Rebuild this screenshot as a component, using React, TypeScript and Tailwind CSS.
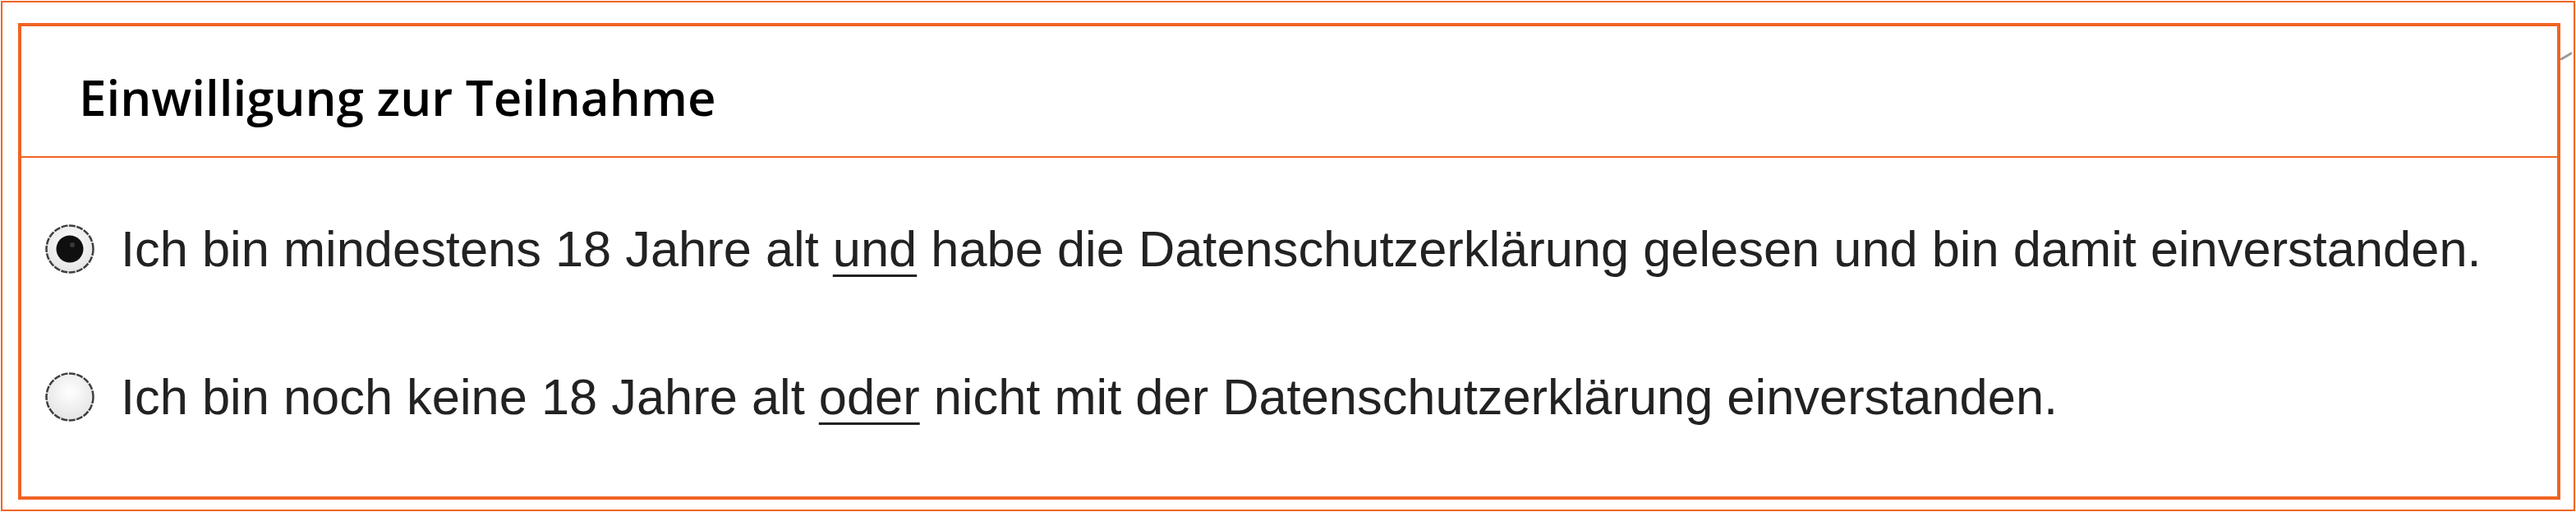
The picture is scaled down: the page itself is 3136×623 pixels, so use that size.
import React from "react";

function Radio({ checked }: { checked?: boolean }) {
  return (
    <svg width="62" height="62" viewBox="0 0 62 62" className="shrink-0">
      <defs>
        <radialGradient id={checked ? "rg1" : "rg2"} cx="50%" cy="40%" r="60%">
          <stop offset="0%" stopColor="#ffffff" />
          <stop offset="100%" stopColor="#e4e4e4" />
        </radialGradient>
      </defs>
      <circle
        cx="31"
        cy="31"
        r="28.5"
        fill={`url(#${checked ? "rg1" : "rg2"})`}
        stroke="#3f3f3f"
        strokeWidth="2.5"
        strokeDasharray="8 1.5"
      />
      {checked && (
        <>
          <circle cx="31" cy="31" r="16.5" fill="#0f0f0f" />
          <circle cx="34" cy="26" r="3" fill="#555" opacity="0.6" />
        </>
      )}
    </svg>
  );
}

export default function App() {
  return (
    <div className="w-[3136px] h-[623px] bg-white p-[1px]" style={{ fontFamily: "'Liberation Sans', Arial, sans-serif" }}>
      <div className="relative h-[621px] border-2 border-[#ef6424] pl-[19px] pr-[16px] pt-[25px] pb-[12px]">
        {/* small grip mark */}
        <svg className="absolute right-[2px] top-[60px]" width="14" height="10" viewBox="0 0 14 10">
          <path d="M1 9 L13 2" stroke="#9a9a9a" strokeWidth="3" strokeLinecap="round" />
        </svg>

        <div className="flex h-full flex-col border-4 border-[#ef6424]">
          {/* Header */}
          <div className="flex h-[160px] items-center border-b-2 border-[#ef6424] pl-[70px] pt-[14px]">
            <h2
              className="text-[60px] font-semibold text-black"
              style={{ fontFamily: "'Open Sans', 'Liberation Sans', sans-serif" }}
            >
              Einwilligung zur Teilnahme
            </h2>
          </div>

          {/* Options */}
          <div className="flex flex-col gap-[118px] pl-[28px] pt-[80px] text-[61.4px] leading-[62px] text-[#222]">
            <label className="flex items-center gap-[31px]">
              <Radio checked />
              <span>
                Ich bin mindestens 18 Jahre alt{" "}
                <span className="underline decoration-[3px] underline-offset-[10px]">und</span> habe die
                Datenschutzerklärung gelesen und bin damit einverstanden.
              </span>
            </label>
            <label className="flex items-center gap-[31px]">
              <Radio />
              <span>
                Ich bin noch keine 18 Jahre alt{" "}
                <span className="underline decoration-[3px] underline-offset-[10px]">oder</span> nicht mit der
                Datenschutzerklärung einverstanden.
              </span>
            </label>
          </div>
        </div>
      </div>
    </div>
  );
}
